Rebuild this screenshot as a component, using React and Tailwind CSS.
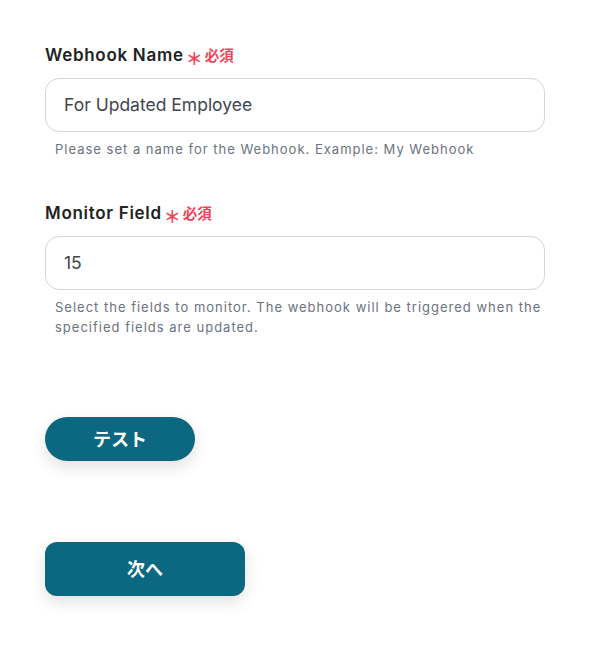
const font = { fontFamily: 'Inter, "Noto Sans CJK JP", sans-serif' };

const Field = ({ label, value, help }) => (
  <div className="pt-[2px]">
    <div className="flex items-center h-[24px]">
      <span className="text-[17px] font-semibold tracking-[0.7px] text-[#222222]">{label}</span>
      <span className="ml-[2px] text-[17px] font-bold text-[#f0435a] leading-none mt-[3px]" style={{ fontFamily: '"Noto Sans CJK JP", sans-serif' }}>＊</span>
      <span className="ml-[2px] text-[14.5px] font-bold text-[#f0435a]">必須</span>
    </div>
    <div className="mt-[10px] h-[54px] w-[500px] rounded-[14px] border border-[#d4d6da] bg-white flex items-center px-[18px] text-[17.5px] text-[#3f4650]">
      <span className="mt-[1px]">{value}</span>
    </div>
    <p className="mt-[7px] pl-[10px] pr-[4px] text-[13px] leading-[20px] tracking-[1px] text-[#6b7280]">{help}</p>
  </div>
);

const App = () => {
  return (
    <div className="w-[589px] h-[651px] bg-white pl-[45px] pt-[42px]" style={font}>
      <Field
        label="Webhook Name"
        value="For Updated Employee"
        help="Please set a name for the Webhook. Example: My Webhook"
      />
      <div className="mt-[41px]">
        <Field
          label="Monitor Field"
          value="15"
          help="Select the fields to monitor. The webhook will be triggered when the specified fields are updated."
        />
      </div>
      <button className="mt-[80px] block w-[150px] h-[44px] rounded-full bg-[#0b6880] text-white text-[18px] font-bold shadow-[0_6px_16px_rgba(0,0,0,0.12)]">
        テスト
      </button>
      <button className="mt-[81px] block w-[200px] h-[54px] rounded-[12px] bg-[#0b6880] text-white text-[18px] font-bold shadow-[0_6px_16px_rgba(0,0,0,0.12)]">
        次へ
      </button>
    </div>
  );
};

export default App;
